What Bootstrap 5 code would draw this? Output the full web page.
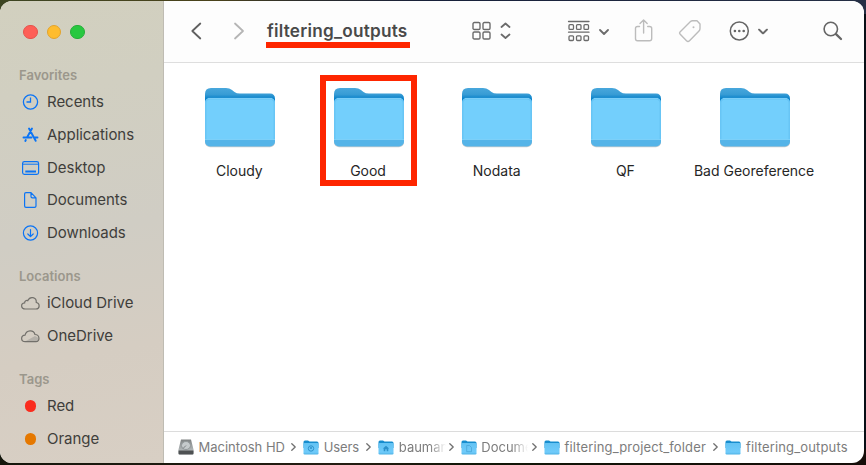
<!DOCTYPE html>
<html lang="en">
<head>
<meta charset="utf-8">
<meta name="viewport" content="width=device-width, initial-scale=1">
<title>filtering_outputs</title>
<link rel="stylesheet" href="https://cdn.jsdelivr.net/npm/bootstrap@5.3.0/dist/css/bootstrap.min.css">
<style>
html,body{height:100%}
body{font-family:Inter,"Liberation Sans",sans-serif;overflow:hidden;padding:1px 2px 2px 0;line-height:1.2;
 background:linear-gradient(90deg,#3d4522 0,#4a421b 25%,#2c2d2c 35%,#17203a 50%,#252f45 100%) top/100% 14px no-repeat,linear-gradient(90deg,#15170c,#241d12 40%,#101708 55%,#160d09) bottom/100% 16px no-repeat,#080f16}
svg{display:block;flex:none;overflow:visible}
.finder{height:462px;width:864px;border-radius:12px}
.side{width:164px;flex:none;padding:21px 0 0 19px;border-right:1px solid #bfbcb3;background:linear-gradient(170deg,#d2d0bf 0,#d1cfc1 20%,#d0cdc4 50%,#d5cdc2 75%,#d8cfc4 100%)}
.lights{padding:2.5px 0 0 4.3px;gap:9px;height:43px}
.light{width:14.5px;height:14.5px;border-radius:50%}
.l-r{background:#fe5f57;border:1px solid #e5534c}.l-y{background:#febc2e;border:1px solid #e2a32c}.l-g{background:#28c840;border:1px solid #25af38}
.head{font-size:13px;font-weight:600;color:#9b978c;height:20px;line-height:21px;letter-spacing:.02px}
.side-row{height:32.8px;font-size:15px;color:#3f3e3b;letter-spacing:-.03px}
.side-row:nth-child(2){margin-top:.6px}
.side-icon{width:28px}
.group{margin-bottom:16.7px}
.dot{width:11.5px;height:11.5px;border-radius:50%;margin-left:5.5px}
.tag-red{background:#fa2c1e}.tag-orange{background:#e57800}
.toolbar{height:62px;background:#fdfdfd;border-bottom:1px solid #dedede;flex:none;color:#6b6b6b;padding:0 0 1px 27px}
.title{font-size:17.2px;font-weight:600;letter-spacing:.23px;color:#494949;width:144px;height:34px;line-height:33px;border-bottom:6px solid #fe2600;margin:0 62px 0 21px;padding-left:1px;white-space:nowrap}
.title-text{height:28px}
.gap-view{margin-left:57px}.gap-tool{margin-left:26px}.gap-search{margin-left:56px}
.items{padding:12px 0 0 11.5px}
.item{width:128.7px;height:111px}
.frame{width:97px;height:111px;padding-top:11.5px}
.picked{border:6px solid #fe2600;padding-top:5.5px}
.name{font-size:14px;color:#262626;line-height:18px;white-space:nowrap;margin-top:13.5px;margin-right:1px}
.pathbar{height:32px;border-top:1px solid #dcdcdc;flex:none;font-size:13px;color:#7c7c7c;padding:0 0 1px 14px}
.crumb{white-space:nowrap;flex:none;margin-left:4.5px;line-height:20px}
.fade-end{width:47px;-webkit-mask-image:linear-gradient(90deg,#000 65%,transparent);mask-image:linear-gradient(90deg,#000 65%,transparent)}
.w1{width:92.8px}.w2{width:42.5px;letter-spacing:-.15px}.w3{width:50px}.w4{width:50.7px}.w5{width:149px}
.wide{letter-spacing:.15px}
.sep{margin-right:7px}
</style>
</head>
<body>
<svg width="0" height="0" class="position-absolute">
<defs>
<linearGradient id="back" x1="0" y1="0" x2="0" y2="1"><stop offset="0" stop-color="#48a7dc"/><stop offset=".22" stop-color="#389cd5"/><stop offset=".36" stop-color="#0b83cb"/></linearGradient>
<linearGradient id="hd" x1="0" y1="0" x2="0" y2="1"><stop offset="0" stop-color="#7e8182"/><stop offset="1" stop-color="#c5cbcd"/></linearGradient>
<linearGradient id="mini" x1="0" y1="0" x2="0" y2="1"><stop offset="0" stop-color="#62c2f3"/><stop offset=".8" stop-color="#70cbfa"/><stop offset="1" stop-color="#4eb2e5"/></linearGradient>
<symbol id="folder" viewBox="0 0 72 62">
<path d="M1 7Q1 1 7 1H22Q25.500 1 28 3L30.500 5Q32.500 6.500 36 6.500H66Q71 6.500 71 12V30H1Z" fill="url(#back)"/>
<rect x="1" y="12" width="70" height="48.300" rx="5" fill="#aaa" opacity=".6"/>
<rect x="1" y="11" width="70" height="48.500" rx="5" fill="#55b4e8"/>
<path d="M1 53V16Q1 11 6 11H66Q71 11 71 16V53Z" fill="#68c5f5"/>
<path d="M2.500 52V16.500Q2.500 12.500 6.500 12.500H65.500Q69.500 12.500 69.500 16.500V52Z" fill="#73cffc"/>
<path d="M1 52.500H71M4 11.400H68" stroke="#85d4fa" stroke-width=".7"/>
</symbol>
<symbol id="small-folder" viewBox="0 0 16 15">
<path d="M.5 2Q.5.500 2 .500H5L6.500 1.500H14Q15.500 1.500 15.500 3V8H.5Z" fill="#178dce"/>
<rect x=".5" y="3" width="15" height="11.500" rx="1.200" fill="url(#mini)"/>
</symbol>
<symbol id="down" viewBox="0 0 10 6"><path d="M1 1L5 5L9 1" fill="none" stroke="currentColor" stroke-width="1.800" stroke-linecap="round" stroke-linejoin="round"/></symbol>
<symbol id="next" viewBox="0 0 5 8"><path d="M.8.800L4.200 4L.8 7.200" fill="none" stroke="#707070" stroke-width="1.300" stroke-linecap="round" stroke-linejoin="round"/></symbol>
</defs>
</svg>
<div class="finder d-flex overflow-hidden bg-white">
<aside class="side">
 <div class="lights d-flex"><span class="light l-r"></span><span class="light l-y"></span><span class="light l-g"></span></div>
 <div class="group">
  <div class="head">Favorites</div>
  <div class="side-row d-flex align-items-center"><span class="side-icon"><svg width="24" height="18" fill="none" stroke="#0b74f5" stroke-width="1.300"><circle cx="11.500" cy="9" r="7.100"/><path d="M11.500 4.500V9H7.500"/></svg></span>Recents</div>
  <div class="side-row d-flex align-items-center"><span class="side-icon"><svg width="24" height="18" fill="none" stroke="#0b74f5" stroke-width="1.900" stroke-linecap="round"><path d="M10 2.500L16.700 14.800M13 2.500L8 11.500M4.500 11.500H12.500M16 11.500H18.500M6.800 14L6.300 15"/></svg></span>Applications</div>
  <div class="side-row d-flex align-items-center"><span class="side-icon"><svg width="24" height="18" fill="none" stroke="#0b74f5" stroke-width="1.200"><rect x="3.600" y="2.600" width="16" height="12.800" rx="1.800"/><path d="M3.600 5.200H19.600" stroke-width="1"/><path d="M6.300 12.500H17" stroke-width="2.200"/></svg></span>Desktop</div>
  <div class="side-row d-flex align-items-center"><span class="side-icon"><svg width="24" height="18" fill="none" stroke="#0b74f5" stroke-width="1.200" stroke-linejoin="round"><path d="M12 1.600H7Q5.600 1.600 5.600 3V15Q5.600 16.400 7 16.400H15.500Q17 16.400 17 15V6.800ZM12 1.600V5.400Q12 6.800 13.400 6.800H17"/></svg></span>Documents</div>
  <div class="side-row d-flex align-items-center"><span class="side-icon"><svg width="24" height="18" fill="none" stroke="#0b74f5" stroke-width="1.200" stroke-linecap="round" stroke-linejoin="round"><circle cx="11.500" cy="9" r="7.100"/><path d="M11.500 5.500V12.500M8.800 10L11.500 12.600L14.200 10"/></svg></span>Downloads</div>
 </div>
 <div class="group">
  <div class="head">Locations</div>
  <div class="side-row d-flex align-items-center"><span class="side-icon"><svg width="24" height="18" fill="none" stroke="#72706b" stroke-width="1.200"><path d="M6.500 15C1.500 15 1.500 9.300 5.600 8.900C5.600 6.600 7.600 6 8.800 6.600C11 1.800 17.600 3 17.300 8.500C21.500 9.500 20.800 15 17 15Z"/></svg></span>iCloud Drive</div>
  <div class="side-row d-flex align-items-center"><span class="side-icon"><svg width="24" height="18" fill="none" stroke="#72706b" stroke-width="1.200"><path d="M6 14.500L16 9L19.500 11L18.500 14.500Z" fill="#b5b1aa" stroke="none"/><path d="M6.300 14.700C1.300 14.700 1.600 8.500 6 8.200C7.500 2.700 14.500 2.300 16 7.500C21.200 7.700 21 14.700 17 14.700Z"/></svg></span>OneDrive</div>
 </div>
 <div>
  <div class="head">Tags</div>
  <div class="side-row d-flex align-items-center"><span class="side-icon"><span class="dot d-block tag-red"></span></span>Red</div>
  <div class="side-row d-flex align-items-center"><span class="side-icon"><span class="dot d-block tag-orange"></span></span>Orange</div>
 </div>
</aside>
<main class="d-flex flex-column flex-grow-1">
 <header class="toolbar d-flex align-items-center">
  <svg width="54" height="18" fill="none" stroke-width="1.800" stroke-linecap="round" stroke-linejoin="round"><path d="M9.300 1.500L1.300 9L9.300 16.500" stroke="#606060"/><path d="M44 1.500L52 9L44 16.500" stroke="#b5b5b5"/></svg>
  <div class="title mt-0"><div class="title-text">filtering_outputs</div></div>
  <svg width="38" height="20" fill="none" stroke="#6b6b6b" stroke-width="1.400"><rect x="1" y="1.500" width="7" height="7" rx="1.300"/><rect x="11" y="1.500" width="7" height="7" rx="1.300"/><rect x="1" y="11" width="7" height="7" rx="1.300"/><rect x="11" y="11" width="7" height="7" rx="1.300"/><path d="M29.500 6L33.500 2.500L37.500 6M29.500 13.500L33.500 17L37.500 13.500" stroke-width="1.800" stroke-linecap="round" stroke-linejoin="round"/></svg>
  <svg class="gap-view" width="41" height="22" fill="none" stroke="#6b6b6b" stroke-width="1.300"><path d="M1.500 1.500H22M1.500 12.200H22" stroke-linecap="round"/><rect x="2" y="4.700" width="4.500" height="4.700" rx="1"/><rect x="9.500" y="4.700" width="4.500" height="4.700" rx="1"/><rect x="17" y="4.700" width="4.500" height="4.700" rx="1"/><rect x="2" y="15.800" width="4.500" height="4.700" rx="1"/><rect x="9.500" y="15.800" width="4.500" height="4.700" rx="1"/><rect x="17" y="15.800" width="4.500" height="4.700" rx="1"/><use href="#down" x="32" y="9" width="10" height="6"/></svg>
  <svg class="gap-tool" width="18" height="24" fill="none" stroke="#bcbcbc" stroke-width="1.400" stroke-linecap="round" stroke-linejoin="round"><path d="M5.500 7.500H3.500Q1.500 7.500 1.500 9.500V19.500Q1.500 21.700 3.500 21.700H15.500Q17.700 21.700 17.700 19.500V9.500Q17.700 7.500 15.500 7.500H13.700M9.600 14V1M6 4.500L9.600 .9L13.200 4.500"/></svg>
  <svg class="gap-tool" width="24" height="24" fill="none" stroke="#bcbcbc" stroke-width="1.400" stroke-linejoin="round"><path d="M12.500 2.500L2 13Q1 14 2 15L8.500 21.800Q10 23.200 11.500 21.800L21 12Q22 11 22 9.500V5L19 1.800H14.500Q13.300 1.800 12.500 2.500Z"/><circle cx="15.500" cy="8.300" r="1" fill="#bcbcbc" stroke="none"/></svg>
  <svg width="38" height="22" class="gap-tool" fill="none" stroke="#666" stroke-width="1.500"><circle cx="11.300" cy="11" r="9"/><g fill="#666" stroke="none"><circle cx="6.900" cy="11" r="1.300"/><circle cx="11.300" cy="11" r="1.300"/><circle cx="15.700" cy="11" r="1.300"/></g><use href="#down" x="30" y="8.500" width="10" height="6"/></svg>
  <svg class="gap-search" width="20" height="20" fill="none" stroke="#666" stroke-linecap="round"><circle cx="8.800" cy="8" r="6.700" stroke-width="1.600"/><path d="M14 13.200L19 18" stroke-width="2.300"/></svg>
 </header>
 <section class="items d-flex flex-grow-1">
  <div class="item d-flex justify-content-center"><div class="frame d-flex flex-column align-items-center"><svg width="72" height="62"><use href="#folder"/></svg><div class="name">Cloudy</div></div></div>
  <div class="item d-flex justify-content-center"><div class="frame picked d-flex flex-column align-items-center"><svg width="72" height="62"><use href="#folder"/></svg><div class="name">Good</div></div></div>
  <div class="item d-flex justify-content-center"><div class="frame d-flex flex-column align-items-center"><svg width="72" height="62"><use href="#folder"/></svg><div class="name">Nodata</div></div></div>
  <div class="item d-flex justify-content-center"><div class="frame d-flex flex-column align-items-center"><svg width="72" height="62"><use href="#folder"/></svg><div class="name">QF</div></div></div>
  <div class="item d-flex justify-content-center"><div class="frame d-flex flex-column align-items-center"><svg width="72" height="62"><use href="#folder"/></svg><div class="name">Bad Georeference</div></div></div>
 </section>
 <footer class="pathbar d-flex align-items-center">
  <svg width="16" height="16"><path d="M3 .5H13L15.500 10.500V14.500Q15.500 15.500 14.500 15.500H1.500Q.5 15.500.5 14.500V10.500Z" fill="url(#hd)"/><path d="M.5 11.500H15.500V14.500Q15.500 15.500 14.500 15.500H1.500Q.5 15.500.5 14.500Z" fill="#4e5153"/><ellipse cx="8" cy="6.500" rx="4.500" ry="4" fill="#c5cacc" stroke="#92989a"/><path d="M8 6.500L5 9.500" stroke="#7c8183"/></svg>
  <span class="crumb w1">Macintosh HD</span><svg class="sep" width="5" height="8"><use href="#next"/></svg>
  <svg width="16" height="15"><use href="#small-folder"/><circle cx="8" cy="8.500" r="2.700" fill="none" stroke="#2d91ca"/><circle cx="8" cy="8" r="1" fill="#2d91ca"/></svg>
  <span class="crumb w2">Users</span><svg class="sep" width="5" height="8"><use href="#next"/></svg>
  <svg width="16" height="15"><use href="#small-folder"/><path d="M4.800 8.500L8 5.800L11.200 8.500H10.300V11.300H8.700V9.300H7.300V11.300H5.700V8.500Z" fill="#2d91ca"/></svg>
  <span class="crumb w3"><span class="d-block fade-end">bauman</span></span><svg class="sep" width="5" height="8"><use href="#next"/></svg>
  <svg width="16" height="15"><use href="#small-folder"/><path d="M5.700 5.500H8.500L10.500 7.500V11.700H5.700Z" fill="none" stroke="#4aa6d8" stroke-width=".8"/></svg>
  <span class="crumb w4"><span class="d-block fade-end">Docume</span></span><svg class="sep" width="5" height="8"><use href="#next"/></svg>
  <svg width="16" height="15"><use href="#small-folder"/></svg>
  <span class="crumb wide w5">filtering_project_folder</span><svg class="sep" width="5" height="8"><use href="#next"/></svg>
  <svg width="16" height="15"><use href="#small-folder"/></svg>
  <span class="crumb wide">filtering_outputs</span>
 </footer>
</main>
</div>
<script src="https://cdn.jsdelivr.net/npm/bootstrap@5.3.0/dist/js/bootstrap.bundle.min.js"></script>
</body>
</html>
